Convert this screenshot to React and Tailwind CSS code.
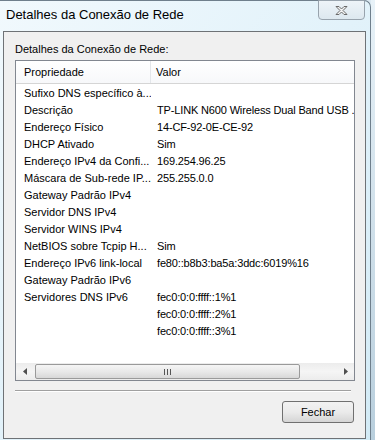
import React from "react";

const rows = [
  ["Sufixo DNS específico à...", ""],
  ["Descrição", "TP-LINK N600 Wireless Dual Band USB ."],
  ["Endereço Físico", "14-CF-92-0E-CE-92"],
  ["DHCP Ativado", "Sim"],
  ["Endereço IPv4 da Confi...", "169.254.96.25"],
  ["Máscara de Sub-rede IP...", "255.255.0.0"],
  ["Gateway Padrão IPv4", ""],
  ["Servidor DNS IPv4", ""],
  ["Servidor WINS IPv4", ""],
  ["NetBIOS sobre Tcpip H...", "Sim"],
  ["Endereço IPv6 link-local", "fe80::b8b3:ba5a:3ddc:6019%16"],
  ["Gateway Padrão IPv6", ""],
  ["Servidores DNS IPv6", "fec0:0:0:ffff::1%1"],
  ["", "fec0:0:0:ffff::2%1"],
  ["", "fec0:0:0:ffff::3%1"],
];

export default function App() {
  return (
    <div className="w-[375px] h-[440px] overflow-hidden flex bg-[#dbe9f2] font-['Liberation_Sans',Arial,sans-serif] text-black">
      <div className="relative w-[371px] h-[440px] shrink-0 flex flex-col rounded-tr-[7px] border-r border-t border-[#6f7f8c] bg-gradient-to-br from-[#f1f9fd] via-[#e2f2fa] to-[#d3ebf6]">
        <div className="h-[30px] shrink-0 pl-[6px] pt-[6px] text-[13px] leading-[16px] text-black">
          Detalhes da Conexão de Rede
        </div>
        <div className="absolute left-[318px] top-[-1px] w-[47px] h-[20px] rounded-b-[4px] border border-[#98a3ad] bg-gradient-to-b from-[#eef4f8] to-[#dde8ef] flex items-center justify-center">
          <svg width="13" height="11" viewBox="0 0 13 11">
            <path
              d="M1 1.5 L4 1.5 L6.5 4 L9 1.5 L12 1.5 L8 5.5 L12 9.5 L9 9.5 L6.5 7 L4 9.5 L1 9.5 L5 5.5 Z"
              fill="#f4f4f4"
              stroke="#6a6a6a"
              strokeWidth="1"
              strokeLinejoin="round"
            />
          </svg>
        </div>
        <div className="ml-[3px] w-[363px] h-[408px] shrink-0 border border-[#6e7276] bg-[#f0f0f0] pl-[11px] pr-[10px] pt-[10px] flex flex-col text-[11px]">
          <div className="h-[14px] leading-[14px] whitespace-nowrap">Detalhes da Conexão de Rede:</div>
          <div className="mt-[4px] w-[340px] h-[321px] border border-[#828790] bg-white flex flex-col overflow-hidden">
            <div className="h-[23px] shrink-0 flex border-b border-[#d5d5d5] bg-gradient-to-b from-white to-[#f7f8fa]">
              <div className="w-[135px] shrink-0 pl-[8px] flex items-center border-r border-[#e3e6ea]">Propriedade</div>
              <div className="flex-1 pl-[5px] flex items-center">Valor</div>
            </div>
            <div className="flex-1 pt-[1px] flex flex-col">
              {rows.map(([k, v], i) => (
                <div key={i} className="h-[17px] shrink-0 flex items-center whitespace-nowrap">
                  <div className="w-[135px] shrink-0 pl-[8px] overflow-hidden">{k}</div>
                  <div className="flex-1 pl-[6px] overflow-hidden tracking-[-0.15px]">{v}</div>
                </div>
              ))}
            </div>
            <div className="h-[17px] shrink-0 flex items-center bg-gradient-to-b from-[#ececec] via-[#f5f5f5] to-[#ececec]">
              <div className="w-[17px] h-[17px] flex items-center justify-center">
                <svg width="4" height="7" viewBox="0 0 4 7"><path d="M4 0 L0 3.5 L4 7 Z" fill="#505050" /></svg>
              </div>
              <div className="ml-[2px] w-[265px] h-[15px] rounded-[2px] border border-[#9a9a9a] bg-gradient-to-b from-[#f5f5f5] via-[#e9e9e9] to-[#d8d8d8] flex items-center justify-center">
                <div className="flex gap-[2px]">
                  <div className="w-[1px] h-[6px] bg-[#555]" />
                  <div className="w-[1px] h-[6px] bg-[#555]" />
                  <div className="w-[1px] h-[6px] bg-[#555]" />
                </div>
              </div>
              <div className="flex-1" />
              <div className="w-[17px] h-[17px] flex items-center justify-center">
                <svg width="4" height="7" viewBox="0 0 4 7"><path d="M0 0 L4 3.5 L0 7 Z" fill="#505050" /></svg>
              </div>
            </div>
          </div>
          <div className="mt-[9px] w-[336px] h-[2px] border-t border-[#a0a0a0] border-b border-b-white" />
          <div className="mt-[9px] flex justify-end pr-[1px]">
            <div className="w-[72px] h-[22px] rounded-[3px] border border-[#707070] bg-gradient-to-b from-[#f2f2f2] via-[#ebebeb] to-[#d5d5d5] flex items-center justify-center text-[11px]">
              Fechar
            </div>
          </div>
        </div>
      </div>
      <div className="flex-1 bg-gradient-to-b from-[#e8f2f8] to-[#b9cfdd]" />
    </div>
  );
}
